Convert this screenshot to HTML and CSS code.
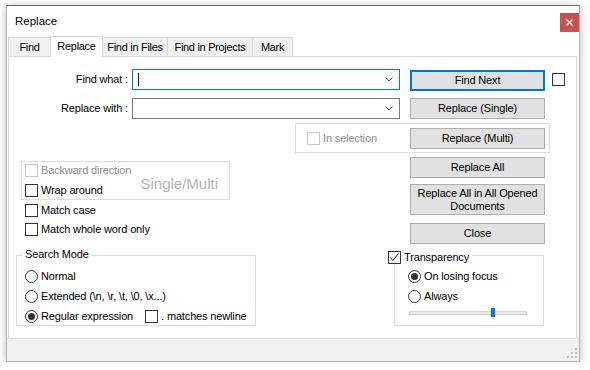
FILE: index.html
```html
<!DOCTYPE html>
<html lang="en">
<head>
<meta charset="utf-8">
<title>Replace</title>
<link rel="stylesheet" href="styles.css">
</head>
<body>
<div class="window">
  <div class="titlebar">
    <span class="title">Replace</span>
    <div class="close"><svg width="19" height="19" viewBox="0 0 19 19"><path d="M6.5 6.5 L12.5 12.5 M12.5 6.5 L6.5 12.5" stroke="#fff" stroke-width="1.7" fill="none"/></svg></div>
  </div>
  <div class="tabs">
    <div class="tab t-find">Find</div>
    <div class="tab active t-replace">Replace</div>
    <div class="tab t-files">Find in Files</div>
    <div class="tab t-projects">Find in Projects</div>
    <div class="tab t-mark">Mark</div>
  </div>
  <div class="panel">
    <div class="field-row row-find">
      <span class="field-label">Find what :</span>
      <div class="combo focused"><span class="caret"></span><svg class="chev" width="8" height="5" viewBox="0 0 8 5"><path d="M0.5 0.5 L4 4 L7.5 0.5" stroke="#444" stroke-width="1" fill="none"/></svg></div>
      <div class="btn default">Find Next</div>
      <span class="box side-box"></span>
    </div>
    <div class="field-row row-replace">
      <span class="field-label">Replace with :</span>
      <div class="combo"><svg class="chev" width="8" height="5" viewBox="0 0 8 5"><path d="M0.5 0.5 L4 4 L7.5 0.5" stroke="#444" stroke-width="1" fill="none"/></svg></div>
      <div class="btn">Replace (Single)</div>
    </div>
    <div class="selection-group">
      <div class="check disabled"><span class="box"></span><span>In selection</span></div>
      <div class="btn">Replace (Multi)</div>
    </div>
    <div class="lower">
      <div class="left-col">
        <div class="sm-group">
          <div class="sm-checks">
            <div class="check disabled"><span class="box"></span><span>Backward direction</span></div>
            <div class="check"><span class="box"></span><span>Wrap around</span></div>
          </div>
          <span class="sm-label">Single/Multi</span>
        </div>
        <div class="check match-case"><span class="box"></span><span>Match case</span></div>
        <div class="check match-word"><span class="box"></span><span>Match whole word only</span></div>
        <div class="group search-mode">
          <span class="group-title sm-title">Search Mode</span>
          <div class="radio-list">
            <div class="check"><span class="radio"></span><span>Normal</span></div>
            <div class="check"><span class="radio"></span><span>Extended (\n, \r, \t, \0, \x...)</span></div>
            <div class="check"><span class="radio on"></span><span>Regular expression</span><span class="box newline-box"></span><span>. matches newline</span></div>
          </div>
        </div>
      </div>
      <div class="right-col">
        <div class="btn btn-all">Replace All</div>
        <div class="btn btn-opened">Replace All in All Opened<br>Documents</div>
        <div class="btn btn-close">Close</div>
        <div class="group transparency">
          <div class="group-title check tr-title"><span class="box checked"><svg width="11" height="11" viewBox="0 0 11 11"><path d="M1.5 5.5 L4 8.5 L9.5 1.5" stroke="#222" stroke-width="1" fill="none"/></svg></span><span>Transparency</span></div>
          <div class="radio-list">
            <div class="check"><span class="radio on"></span><span>On losing focus</span></div>
            <div class="check"><span class="radio"></span><span>Always</span></div>
          </div>
          <div class="slider"><span class="thumb"></span></div>
        </div>
      </div>
    </div>
  </div>
  <div class="statusbar">
    <svg class="grip" width="11" height="11" viewBox="0 0 11 11" fill="#c2c2c2"><rect x="8" y="0" width="2" height="2"/><rect x="8" y="4" width="2" height="2"/><rect x="4" y="4" width="2" height="2"/><rect x="8" y="8" width="2" height="2"/><rect x="4" y="8" width="2" height="2"/><rect x="0" y="8" width="2" height="2"/></svg>
  </div>
</div>
</body>
</html>
```
FILE: styles.css
```css
* { box-sizing: border-box; }
body {
  margin: 0;
  background: #fff;
  font-family: "Liberation Sans", Arial, sans-serif;
  font-size: 11px;
  letter-spacing: -0.15px;
  color: #000;
}
.window {
  width: 574px;
  height: 357px;
  margin: 5px 0 0 6px;
  border: 1px solid #b4b4b4;
  border-top-color: #6a6a6a;
  background: #fff;
  display: flex;
  flex-direction: column;
  box-shadow: 0 1px 8px rgba(0,0,0,0.28);
}
.titlebar {
  height: 30px;
  display: flex;
  align-items: flex-start;
  padding-left: 8px;
}
.title {
  margin-top: 9px;
  font-size: 11.5px;
  line-height: 13px;
  letter-spacing: 0;
}
.close {
  margin-left: auto;
  margin-top: 7px;
  width: 19px;
  height: 19px;
  background: #c75050;
}
.close svg { display: block; }
.tabs {
  height: 20px;
  display: flex;
  align-items: flex-end;
  padding-left: 1px;
}
.tab {
  height: 19px;
  border: 1px solid #d9d9d9;
  border-bottom: none;
  background: #f0f0f0;
  margin-right: -1px;
  text-align: center;
  line-height: 18px;
  white-space: nowrap;
  letter-spacing: -0.3px;
}
.tab.active {
  height: 21px;
  margin-bottom: -1px;
  background: #fff;
  position: relative;
  z-index: 1;
  line-height: 18px;
}
.t-find { width: 43px; }
.t-replace { width: 53px; }
.t-files { width: 66px; }
.t-projects { width: 86px; }
.t-mark { width: 41px; }
.panel {
  flex: 1;
  margin: 0 2px 0 1px;
  border: 1px solid #d9d9d9;
  border-bottom: none;
  padding-top: 12px;
}
.field-row {
  display: flex;
  align-items: flex-start;
  height: 22px;
}
.row-replace { margin-top: 7px; height: 21px; }
.field-label {
  width: 119px;
  margin-right: 4px;
  text-align: right;
  line-height: 21px;
}
.combo {
  width: 268px;
  height: 21px;
  border: 1px solid #7a7a7a;
  display: flex;
  align-items: center;
  padding: 0 6px 0 5px;
}
.combo.focused { border-color: #0078d7; }
.caret {
  width: 1px;
  height: 13px;
  background: #000;
}
.chev { margin-left: auto; display: block; }
.btn {
  width: 135px;
  height: 21px;
  border: 1px solid #adadad;
  background: #e1e1e1;
  display: flex;
  align-items: center;
  justify-content: center;
  text-align: center;
  line-height: 13px;
}
.field-row .btn { margin-left: 10px; }
.btn.default {
  border: 2px solid #0078d7;
  margin-top: 1px;
}
.box {
  width: 13px;
  height: 13px;
  border: 1px solid #333;
  background: #fff;
  flex: none;
  display: flex;
  align-items: center;
  justify-content: center;
}
.box svg { display: block; }
.side-box { margin: 4px 0 0 7px; }
.check {
  display: flex;
  align-items: center;
  height: 13px;
  line-height: 13px;
  white-space: nowrap;
}
.check .box + span, .check .radio + span { margin-left: 3px; }
.check.disabled { color: #8d8d8d; }
.check.disabled .box { border-color: #c8c8c8; }
.selection-group {
  margin: 4px 0 0 286px;
  width: 255px;
  height: 30px;
  border: 1px solid #dcdcdc;
  display: flex;
  align-items: center;
  padding: 0 4px 0 11px;
}
.selection-group .btn { margin-left: auto; }
.lower {
  display: flex;
  align-items: flex-start;
}
.left-col {
  width: 247px;
  display: flex;
  flex-direction: column;
  align-items: flex-start;
}
.sm-group {
  margin: 8px 0 0 12px;
  width: 209px;
  height: 39px;
  border: 1px solid #dcdcdc;
  padding: 2px 11px 0 3px;
  display: flex;
}
.sm-checks {
  display: flex;
  flex-direction: column;
  gap: 7px;
}
.sm-label {
  margin-left: auto;
  align-self: center;
  margin-top: 3px;
  font-size: 15px;
  letter-spacing: 0;
  color: #b4b4b4;
}
.match-case { margin: 4px 0 0 16px; }
.match-word { margin: 6px 0 0 16px; }
.group {
  position: relative;
  border: 1px solid #dcdcdc;
}
.group-title {
  position: absolute;
  background: #fff;
  line-height: 13px;
}
.search-mode {
  margin: 19px 0 0 7px;
  width: 240px;
  height: 71px;
  padding: 14px 0 0 8px;
}
.sm-title {
  top: -8px;
  left: 6px;
  padding: 0 2px;
}
.radio-list {
  display: flex;
  flex-direction: column;
  gap: 7px;
}
.radio {
  width: 13px;
  height: 13px;
  border: 1px solid #333;
  border-radius: 50%;
  background: #fff;
  flex: none;
  display: flex;
  align-items: center;
  justify-content: center;
}
.radio.on::after {
  content: "";
  width: 7px;
  height: 7px;
  border-radius: 50%;
  background: #333;
}
.newline-box { margin-left: 12px; }
.right-col {
  margin-left: 132px;
  width: 165px;
  display: flex;
  flex-direction: column;
  align-items: flex-start;
}
.right-col .btn { margin-left: 22px; }
.btn-all { margin-top: 4px; }
.btn-opened { margin-top: 6px; height: 31px; }
.btn-close { margin-top: 8px; }
.transparency {
  margin: 11px 0 0 6px;
  width: 150px;
  height: 71px;
  padding: 14px 0 0 13px;
}
.tr-title {
  top: -5px;
  left: -7px;
  padding-right: 3px;
}
.slider {
  position: relative;
  margin-top: 8px;
  margin-left: 1px;
  width: 118px;
  height: 4px;
  background: #e7e7e7;
  border: 1px solid #d6d6d6;
}
.thumb {
  position: absolute;
  left: 81px;
  top: -4px;
  width: 4px;
  height: 9px;
  background: #0078d7;
}
.statusbar {
  height: 23px;
  background: #f0f0f0;
  border-top: 1px solid #e0e0e0;
  display: flex;
  justify-content: flex-end;
  align-items: flex-end;
  padding: 0 1px 2px 0;
}
.grip { display: block; }
```
